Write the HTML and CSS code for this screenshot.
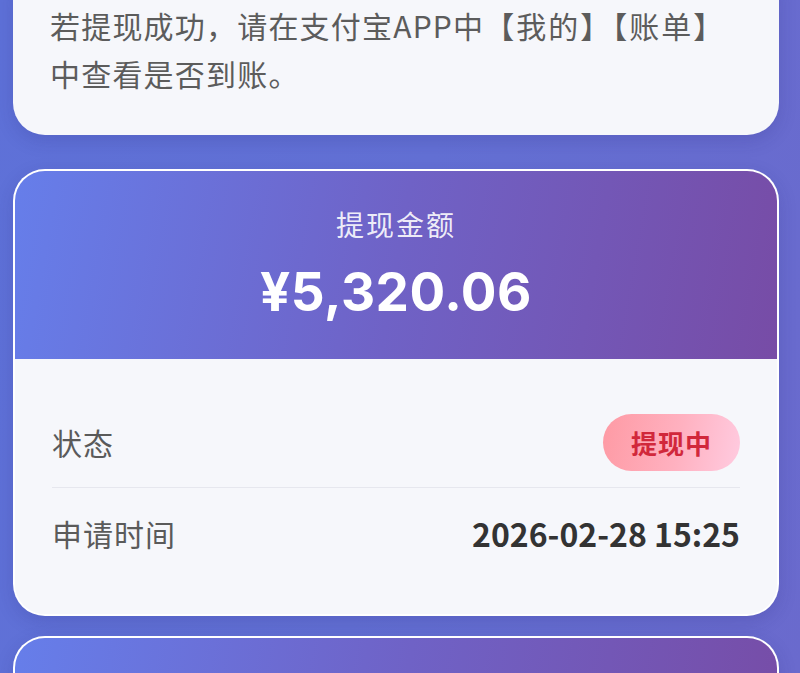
FILE: index.html
```html
<!DOCTYPE html>
<html lang="zh-CN">
<head>
<meta charset="utf-8">
<link rel="stylesheet" href="styles.css">
</head>
<body>
<div class="page">
  <div class="card tip">
    <p class="tip-text">若提现成功，请在支付宝APP中<span class="br">【我的】</span><span class="br">【账单】</span><br>中查看是否到账。</p>
  </div>
  <div class="card record">
    <div class="record-head">
      <div class="head-label">提现金额</div>
      <div class="head-amount">¥5,320.06</div>
    </div>
    <div class="record-body">
      <div class="row row-first">
        <span class="row-label">状态</span>
        <span class="badge">提现中</span>
      </div>
      <div class="row">
        <span class="row-label">申请时间</span>
        <span class="row-value">2026-02-28 15:25</span>
      </div>
    </div>
  </div>
  <div class="card record next">
    <div class="record-head"></div>
  </div>
</div>
</body>
</html>
```
FILE: styles.css
```css
html, body {
  margin: 0;
  padding: 0;
  height: 100%;
  overflow: hidden;
}
body {
  background: linear-gradient(100deg, #5e71d8 0%, #6370d4 50%, #6a6acd 100%);
  font-family: "Noto Sans CJK SC", "Noto Sans", sans-serif;
}
.page {
  padding: 0 21px 0 13px;
  display: flex;
  flex-direction: column;
}
.card {
  border-radius: 32px;
  background: #f6f7fb;
  overflow: hidden;
  box-shadow: 0 6px 18px rgba(40, 40, 120, 0.18);
}
.tip {
  margin-top: -37px;
  padding: 38px 20px 38px 37px;
}
.tip-text {
  margin: 0;
  font-size: 30px;
  line-height: 48px;
  color: #5c5c5c;
  letter-spacing: 1.2px;
  white-space: nowrap;
}
.br {
  letter-spacing: 2px;
}
.record {
  margin-top: 34px;
  border: 2px solid rgba(255, 255, 255, 0.92);
  width: 762px;
}
.next {
  margin-top: 20px;
  height: 200px;
}
.record-head {
  background: linear-gradient(100deg, #667eea 0%, #6f62c6 50%, #774ca6 100%);
  padding: 35px 0 35px;
  text-align: center;
  color: #fff;
}
.next .record-head {
  height: 200px;
  padding: 0;
}
.head-label {
  font-size: 28px;
  line-height: 36px;
  letter-spacing: 2px;
  color: rgba(255, 255, 255, 0.9);
}
.head-amount {
  margin-top: 18px;
  font-family: Inter, "Noto Sans", sans-serif;
  font-weight: 700;
  font-size: 53px;
  line-height: 64px;
  letter-spacing: 0.5px;
}
.record-body {
  background: #f6f7fb;
  padding: 38px 37px 36px 37px;
}
.row {
  height: 90px;
  display: flex;
  align-items: center;
  justify-content: space-between;
}
.row-first {
  border-bottom: 1px solid #e6e7ee;
}
.row-label {
  font-size: 30px;
  letter-spacing: 1px;
  color: #5a5a5a;
}
.badge {
  width: 137px;
  height: 57px;
  border-radius: 29px;
  background: linear-gradient(100deg, #fe9aa4 0%, #ffb1c0 55%, #ffcbe0 100%);
  color: #d1283b;
  font-size: 26px;
  font-weight: 700;
  display: flex;
  align-items: center;
  justify-content: center;
  letter-spacing: 1px;
}
.row-value {
  font-family: "Noto Sans CJK SC", "Noto Sans", sans-serif;
  font-size: 32px;
  font-weight: 700;
  color: #333333;
}
```
